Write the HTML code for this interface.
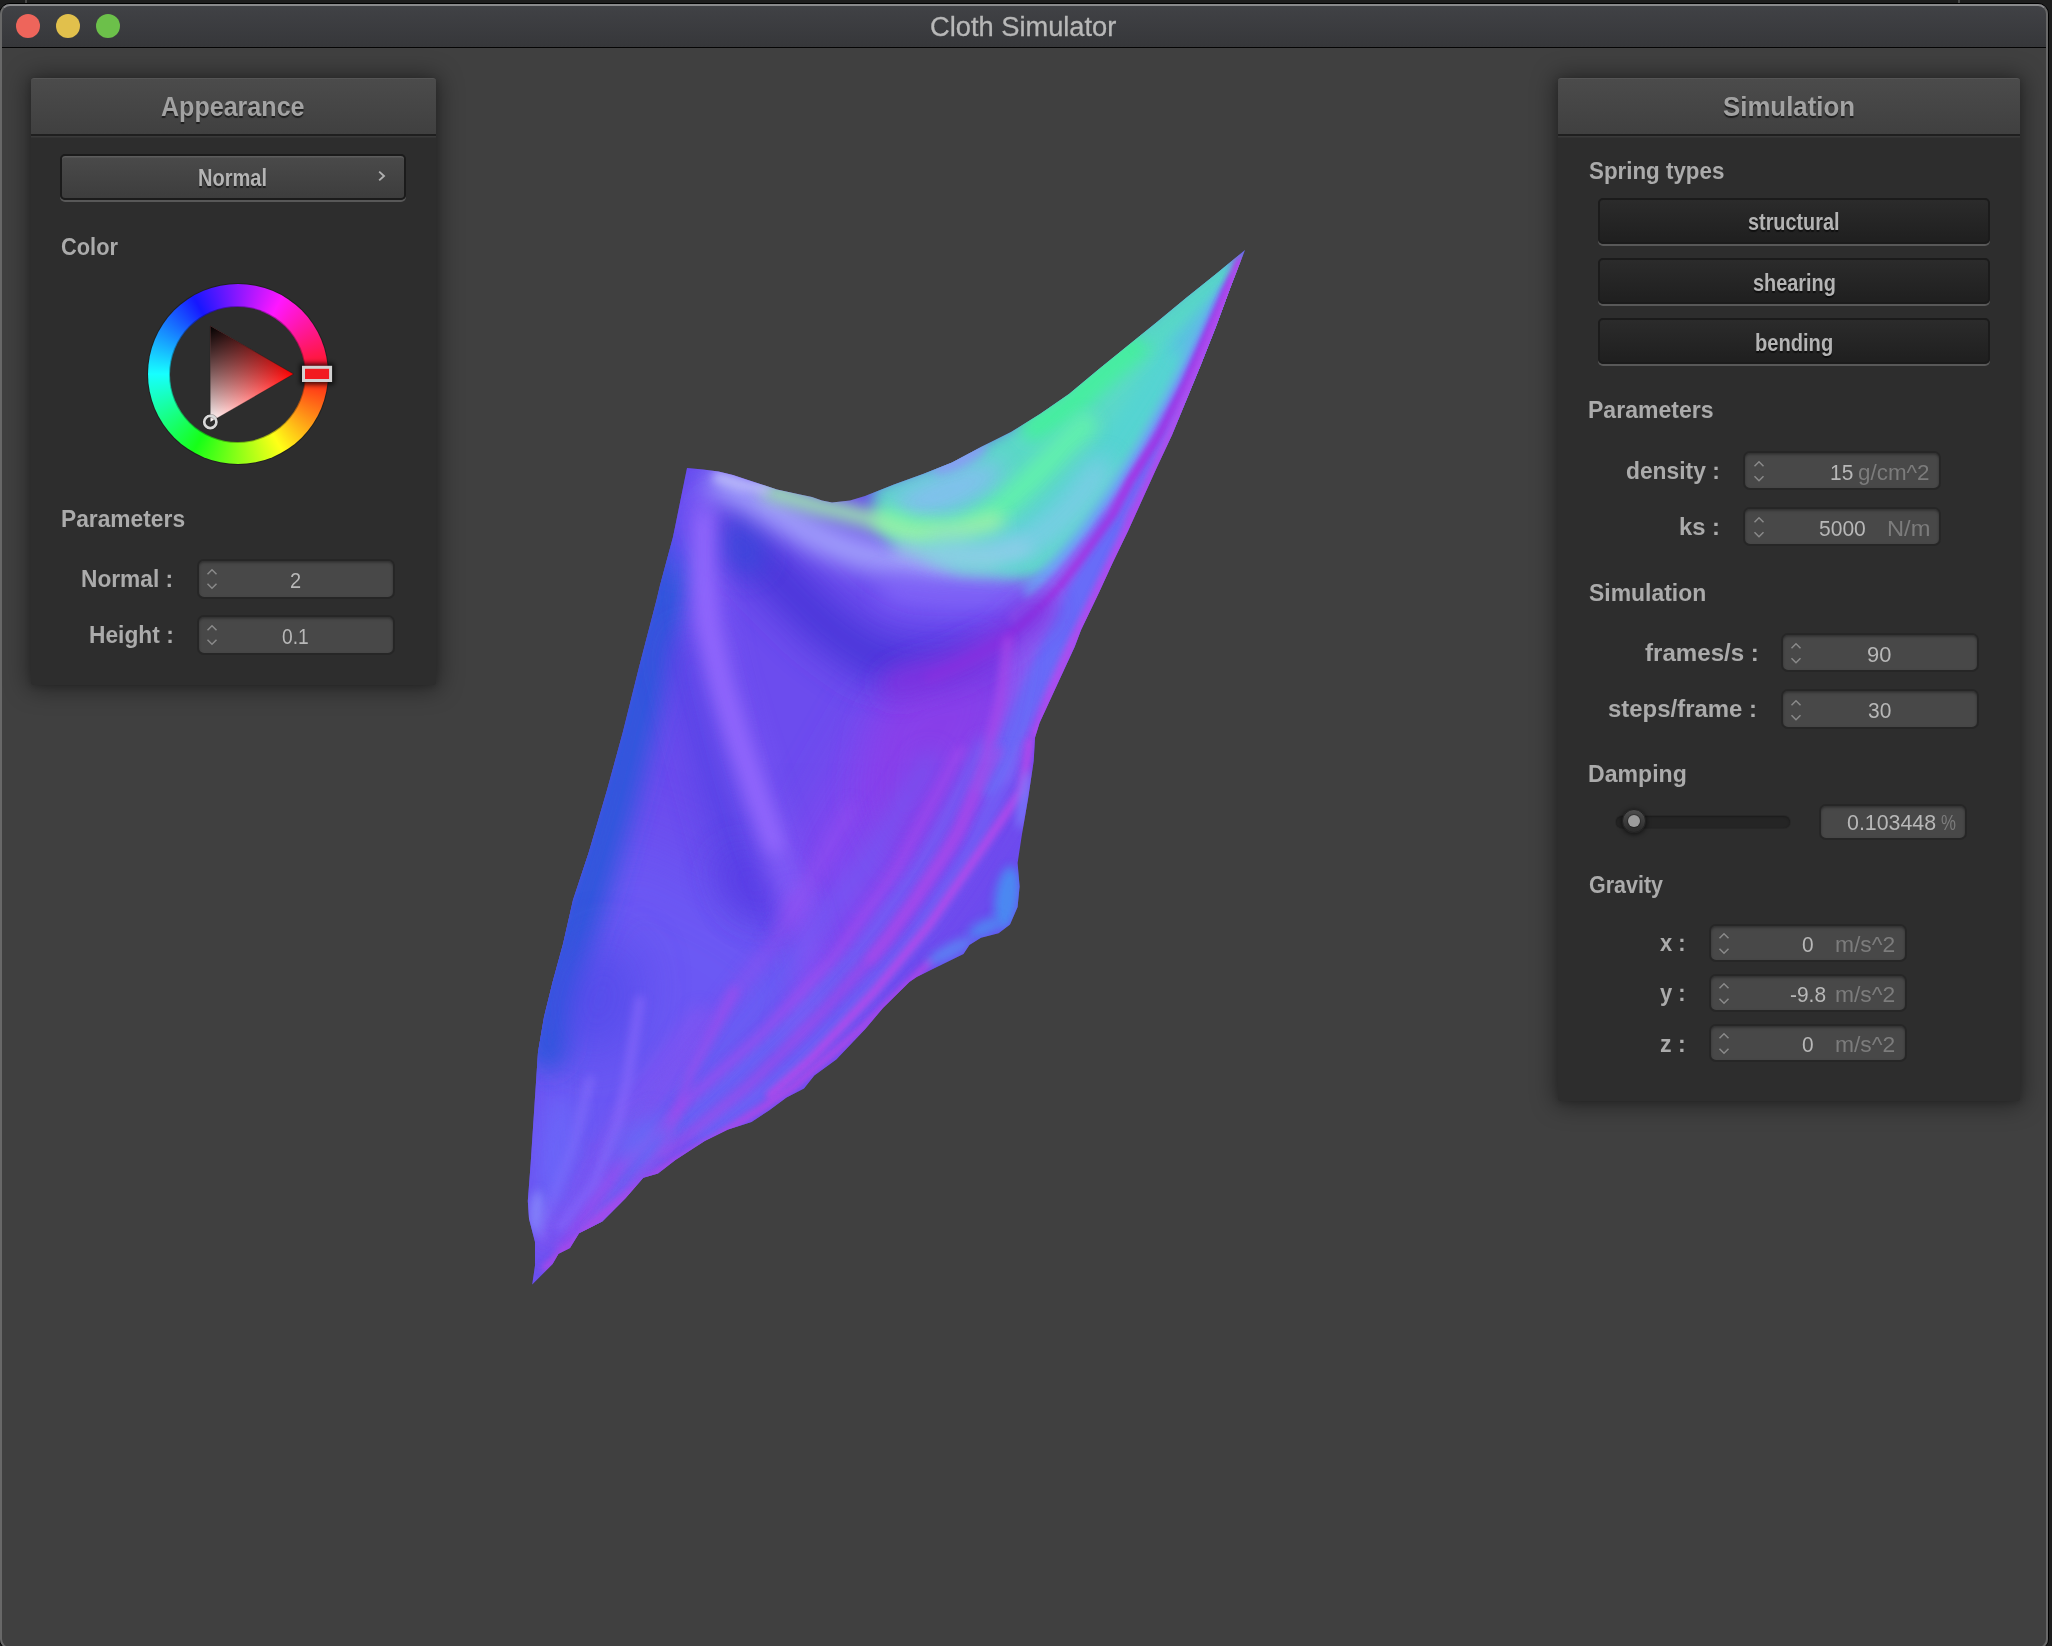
<!DOCTYPE html>
<html lang="en"><head><meta charset="utf-8"><title>Cloth Simulator</title>
<style>
html,body{margin:0;padding:0}
body{width:2052px;height:1646px;overflow:hidden;background:#1d1d1d;position:relative;
 font-family:"Liberation Sans",Arial,sans-serif}
.abs{position:absolute}
#tickl,#tickr{position:absolute;top:0;width:2px;height:3px;background:#484848}
#win{position:absolute;left:-1px;top:3px;width:2048px;height:1644.5px;border:1px solid #000;border-radius:11px;
 background:#404040;overflow:hidden}
#winedge{position:absolute;left:0;top:4px;width:2048px;height:1644.5px;border-radius:10px;box-sizing:border-box;
 border:2px solid #686868;border-top:2px solid #8a8a8c;pointer-events:none}
#titlebar{position:absolute;left:0;top:0;width:100%;height:43.4px;border-bottom:1.5px solid #050505;
 background:linear-gradient(#414246,#36373a)}
.light{position:absolute;top:13.9px;width:24.4px;height:24.4px;border-radius:50%}
.tx{position:absolute;white-space:nowrap;line-height:1;transform-origin:0 50%;display:inline-block}
.ttl{-webkit-text-stroke:0.3px #b8b8b8}
.panel{position:absolute;background:#2d2d2d;border-radius:3px;box-shadow:0 1px 24px 3px rgba(0,0,0,.44),0 1px 6px rgba(0,0,0,.18)}
.phdr{position:absolute;left:0;top:0;width:100%;box-sizing:border-box;border-radius:3px 3px 0 0;background:linear-gradient(#4b4b4b,#404040);
 border-top:1px solid #555;border-bottom:2.5px solid #1f1f1f;box-shadow:0 1.5px 0 #3a3a3a}
.btn{position:absolute;box-sizing:border-box;border:2px solid #1b1b1b;border-radius:5px;
 background:linear-gradient(#4a4a4a,#3d3d3d);box-shadow:0 2px 0 #585858, inset 0 1.5px 0 #5c5c5c}
.btn.pushed{background:linear-gradient(#2b2b2b,#1f1f1f);box-shadow:0 2px 0 #585858}
.tb{position:absolute;box-sizing:border-box;border:2.8px solid #262626;border-radius:7px;background:#484848;
 box-shadow:inset 0 1.5px 2.5px rgba(0,0,0,.35)}
.track{position:absolute;border-radius:6px;background:#252525;box-shadow:inset 0 1px 2px #1c1c1c,0 0 0 1px rgba(0,0,0,.12)}
.knob{position:absolute;width:24px;height:24px;border-radius:50%;background:linear-gradient(#4e4e4e,#2a2a2a);
 box-shadow:0 1px 4px 1px rgba(0,0,0,.5);border:1px solid #222;box-sizing:border-box}
.knobdot{position:absolute;width:12.4px;height:12.4px;border-radius:50%;background:#9c9c9c;box-shadow:0 0 0 1px rgba(0,0,0,.25)}
</style></head>
<body>
<div id="tickl" style="left:25px"></div><div id="tickr" style="left:1958px"></div>
<div id="win">
 <div id="titlebar"></div>
</div>
<div id="winedge"></div>
<div class="light" style="left:15.8px;background:#ee655b"></div>
<div class="light" style="left:55.8px;background:#e1c04c"></div>
<div class="light" style="left:95.8px;background:#6cc04a"></div>
<span id="t39" class="tx ttl" style="left:929.68px;top:14.01px;font-size:26.80px;font-weight:400;color:#b8b8b8;transform:scaleX(1.0172)">Cloth Simulator</span>
<!--CLOTH-->
<svg class="abs" style="left:0;top:0" width="2052" height="1646" viewBox="0 0 2052 1646">
<defs>
<clipPath id="cc"><polygon points="687.0,468.0 703.0,469.5 718.5,471.5 733.0,475.0 748.0,480.0 777.0,489.5 800.0,494.5 812.0,497.0 822.0,500.5 832.0,502.5 850.0,500.5 865.0,496.0 894.0,484.5 923.0,474.0 952.0,462.5 982.0,446.5 1011.0,432.0 1040.0,414.0 1069.0,394.0 1099.0,369.0 1128.0,345.5 1157.0,322.0 1186.0,298.0 1216.0,274.0 1245.0,250.0 1230.0,288.5 1216.0,326.5 1201.0,364.5 1186.0,401.0 1172.0,435.0 1157.0,467.0 1142.5,499.0 1128.0,531.0 1113.0,562.0 1099.0,592.6 1081.0,630.0 1074.6,647.0 1057.0,685.0 1039.5,723.0 1035.0,737.5 1033.7,761.0 1028.0,799.0 1022.0,834.0 1017.6,863.0 1019.6,886.5 1017.6,907.0 1010.0,924.6 998.6,933.3 981.0,937.7 969.4,945.0 963.5,954.0 940.0,965.5 916.7,977.0 909.4,982.0 883.0,1008.0 865.5,1028.7 836.3,1059.4 814.3,1075.4 804.0,1088.6 786.5,1097.4 769.0,1110.5 751.5,1122.0 728.0,1129.5 704.7,1141.0 675.4,1160.0 658.0,1173.4 643.3,1177.8 625.7,1198.0 602.3,1221.6 579.0,1233.3 570.0,1248.0 558.5,1253.8 552.6,1264.0 532.2,1284.5 535.0,1265.5 535.0,1242.0 529.0,1218.7 527.8,1201.0 530.7,1163.0 534.5,1104.7 538.0,1052.0 544.0,1017.0 552.6,982.0 563.0,944.0 573.0,900.0 589.0,851.5 607.0,790.0 623.0,731.6 639.0,667.3 656.5,600.0 660.0,585.3 673.0,537.0"/></clipPath>
<filter id="b3" filterUnits="userSpaceOnUse" x="420" y="160" width="940" height="1220"><feGaussianBlur stdDeviation="3"/></filter>
<filter id="b5" filterUnits="userSpaceOnUse" x="420" y="160" width="940" height="1220"><feGaussianBlur stdDeviation="5"/></filter>
<filter id="b8" filterUnits="userSpaceOnUse" x="420" y="160" width="940" height="1220"><feGaussianBlur stdDeviation="8"/></filter>
<filter id="b12" filterUnits="userSpaceOnUse" x="420" y="160" width="940" height="1220"><feGaussianBlur stdDeviation="12"/></filter>
<filter id="b18" filterUnits="userSpaceOnUse" x="420" y="160" width="940" height="1220"><feGaussianBlur stdDeviation="18"/></filter>
<filter id="b25" filterUnits="userSpaceOnUse" x="420" y="160" width="940" height="1220"><feGaussianBlur stdDeviation="25"/></filter>
<filter id="b35" filterUnits="userSpaceOnUse" x="420" y="160" width="940" height="1220"><feGaussianBlur stdDeviation="35"/></filter>
</defs>
<g clip-path="url(#cc)">
<rect x="500" y="230" width="780" height="1080" fill="#6c4cee"/>
<polygon points="600.0,820.0 760.0,900.0 880.0,1000.0 700.0,1160.0 520.0,1300.0 505.0,1050.0" fill="#6c5af4" filter="url(#b35)" opacity="0.9"/>
<path d="M676.0 560.0 L664.0 610.0 L650.0 665.0 L632.0 735.0 L615.0 800.0 L597.0 860.0 L580.0 915.0 L566.0 965.0 L554.0 1010.0 L548.0 1050.0" fill="none" stroke="#2f56dc" stroke-width="42" stroke-linecap="round" stroke-linejoin="round" filter="url(#b12)" opacity="1"/>
<path d="M694.0 480.0 L686.0 520.0 L676.0 560.0" fill="none" stroke="#5c4ef2" stroke-width="26" stroke-linecap="round" stroke-linejoin="round" filter="url(#b12)" opacity="0.7"/>
<polygon points="880.0,700.0 1020.0,650.0 1030.0,760.0 940.0,900.0 830.0,1010.0 790.0,860.0" fill="#8446f0" filter="url(#b25)" opacity="0.95"/>
<path d="M722.0 522.0 L745.0 542.0 L786.0 586.0 L825.0 624.0 L873.0 658.0 L930.0 668.0 L975.0 664.0" fill="none" stroke="#4636d8" stroke-width="44" stroke-linecap="round" stroke-linejoin="round" filter="url(#b18)" opacity="1"/>
<ellipse cx="742" cy="548" rx="22" ry="30" transform="rotate(-35 742 548)" fill="#3c48dc" filter="url(#b12)" opacity="0.8"/>
<path d="M688.0 650.0 L715.0 760.0 L740.0 850.0 L755.0 895.0" fill="none" stroke="#5242e4" stroke-width="38" stroke-linecap="round" stroke-linejoin="round" filter="url(#b18)" opacity="0.9"/>
<ellipse cx="755" cy="885" rx="42" ry="26" transform="rotate(40 755 885)" fill="#5a3ee6" filter="url(#b18)" opacity="0.9"/>
<ellipse cx="600" cy="1000" rx="36" ry="60" transform="rotate(15 600 1000)" fill="#5048e8" filter="url(#b25)" opacity="0.8"/>
<path d="M703.0 500.0 L702.0 560.0 L707.0 620.0 L720.0 680.0 L738.0 740.0 L758.0 800.0 L780.0 860.0 L798.0 905.0" fill="none" stroke="#8a64fa" stroke-width="34" stroke-linecap="round" stroke-linejoin="round" filter="url(#b12)" opacity="0.75"/>
<path d="M704.0 520.0 L703.0 570.0 L708.0 625.0 L721.0 683.0 L739.0 742.0 L759.0 801.0 L775.0 845.0" fill="none" stroke="#9a6cff" stroke-width="16" stroke-linecap="round" stroke-linejoin="round" filter="url(#b8)" opacity="0.8"/>
<path d="M798.0 905.0 L812.0 960.0 L795.0 1030.0" fill="none" stroke="#9050f4" stroke-width="24" stroke-linecap="round" stroke-linejoin="round" filter="url(#b12)" opacity="0.75"/>
<path d="M722.0 483.0 L750.0 497.0 L780.0 515.0 L815.0 536.0 L855.0 552.0 L893.0 561.0 L935.0 566.0 L971.0 567.0 L1010.0 565.0 L1050.0 554.0" fill="none" stroke="#a4a4fc" stroke-width="30" stroke-linecap="round" stroke-linejoin="round" filter="url(#b12)" opacity="1"/>
<path d="M893.0 590.0 L950.0 598.0 L1010.0 596.0 L1055.0 580.0" fill="none" stroke="#8468fa" stroke-width="26" stroke-linecap="round" stroke-linejoin="round" filter="url(#b12)" opacity="0.85"/>
<polygon points="870.0,488.0 950.0,460.0 1040.0,410.0 1120.0,345.0 1200.0,283.0 1246.0,246.0 1230.0,292.0 1186.0,390.0 1136.0,480.0 1090.0,545.0 1040.0,580.0 960.0,572.0 890.0,540.0" fill="#5cd8c8" filter="url(#b8)" opacity="1"/>
<ellipse cx="945" cy="492" rx="62" ry="20" transform="rotate(-22 945 492)" fill="#84bef0" filter="url(#b12)" opacity="0.95"/>
<path d="M1180.0 345.0 L1150.0 395.0 L1118.0 442.0 L1085.0 485.0 L1050.0 522.0 L1010.0 550.0" fill="none" stroke="#54d4d2" stroke-width="34" stroke-linecap="round" stroke-linejoin="round" filter="url(#b8)" opacity="1"/>
<path d="M1232.0 275.0 L1210.0 305.0 L1185.0 345.0" fill="none" stroke="#5cc0e2" stroke-width="26" stroke-linecap="round" stroke-linejoin="round" filter="url(#b8)" opacity="1"/>
<path d="M1035.0 426.0 L1063.0 410.0 L1087.0 388.0 L1111.0 366.0 L1136.0 345.0" fill="none" stroke="#46eea0" stroke-width="30" stroke-linecap="round" stroke-linejoin="round" filter="url(#b8)" opacity="1"/>
<path d="M1150.0 334.0 L1172.0 315.0 L1195.0 296.0 L1222.0 275.0" fill="none" stroke="#56d8c6" stroke-width="22" stroke-linecap="round" stroke-linejoin="round" filter="url(#b8)" opacity="0.95"/>
<path d="M1085.0 425.0 L1052.0 458.0 L1026.0 484.0 L1002.0 506.0 L978.0 524.0 L953.0 534.0 L917.0 530.0 L885.0 517.0" fill="none" stroke="#62f0ac" stroke-width="24" stroke-linecap="round" stroke-linejoin="round" filter="url(#b8)" opacity="0.95"/>
<path d="M995.0 521.0 L955.0 532.0 L912.0 533.0 L873.0 520.0 L840.0 511.0 L815.0 505.0 L790.0 497.0 L770.0 491.0" fill="none" stroke="#a0f0a6" stroke-width="18" stroke-linecap="round" stroke-linejoin="round" filter="url(#b8)" opacity="0.9"/>
<path d="M765.0 489.0 L740.0 484.0 L718.0 477.0" fill="none" stroke="#c4c6fa" stroke-width="10" stroke-linecap="round" stroke-linejoin="round" filter="url(#b5)" opacity="0.8"/>
<ellipse cx="960" cy="459" rx="30" ry="9" transform="rotate(-27 960 459)" fill="#8a9cf6" filter="url(#b5)" opacity="0.85"/>
<path d="M900.0 548.0 L940.0 556.0 L985.0 558.0 L1025.0 548.0" fill="none" stroke="#a6d0ea" stroke-width="14" stroke-linecap="round" stroke-linejoin="round" filter="url(#b8)" opacity="0.8"/>
<path d="M940.0 548.0 L990.0 552.0 L1035.0 540.0 L1070.0 510.0 L1100.0 470.0" fill="none" stroke="#8ccaec" stroke-width="24" stroke-linecap="round" stroke-linejoin="round" filter="url(#b12)" opacity="0.8"/>
<path d="M1228.0 296.0 L1200.0 352.0 L1172.0 405.0 L1145.0 452.0 L1117.0 496.0 L1088.0 535.0 L1060.0 568.0 L1035.0 592.0" fill="none" stroke="#6ea4f6" stroke-width="22" stroke-linecap="round" stroke-linejoin="round" filter="url(#b5)" opacity="1"/>
<path d="M1232.0 292.0 L1206.0 346.0 L1180.0 398.0 L1153.0 447.0 L1125.0 492.0 L1097.0 531.0 L1068.0 566.0 L1042.0 594.0 L1015.0 618.0" fill="none" stroke="#8c62f4" stroke-width="12" stroke-linecap="round" stroke-linejoin="round" filter="url(#b3)" opacity="0.95"/>
<polygon points="1236.0,272.0 1186.0,384.0 1131.0,480.0 1098.0,536.0 1062.0,583.0 1029.0,618.0 1010.0,640.0 1002.0,690.0 992.0,740.0 985.0,790.0 1010.0,780.0 1026.0,745.0 1034.0,720.0 1058.0,680.0 1076.0,640.0 1120.0,545.0 1149.0,480.0 1186.0,398.0 1238.0,270.0" fill="#8a5ef4" filter="url(#b5)" opacity="1"/>
<path d="M1232.0 280.0 L1186.0 388.0 L1140.0 478.0 L1112.0 528.0" fill="none" stroke="#6a6cf8" stroke-width="9" stroke-linecap="round" stroke-linejoin="round" filter="url(#b3)" opacity="1"/>
<path d="M1112.0 528.0 L1080.0 592.0 L1052.0 648.0 L1028.0 700.0 L1005.0 748.0 L986.0 784.0" fill="none" stroke="#686cf8" stroke-width="24" stroke-linecap="round" stroke-linejoin="round" filter="url(#b5)" opacity="1"/>
<polygon points="1015.0,640.0 965.0,668.0 905.0,682.0 875.0,720.0 862.0,800.0 895.0,870.0 955.0,810.0 998.0,725.0" fill="#8a3ce8" filter="url(#b18)" opacity="0.8"/>
<path d="M1240.0 262.0 L1228.0 288.6 L1208.7 332.3 L1186.0 384.0 L1160.0 434.4 L1131.0 480.0 L1113.0 514.5 L1097.5 536.0 L1080.0 560.0 L1062.0 583.0 L1045.0 602.0 L1029.0 618.0 L1008.0 637.0" fill="none" stroke="#a62ee2" stroke-width="7" stroke-linecap="round" stroke-linejoin="round" filter="url(#b3)" opacity="1"/>
<path d="M1008.0 637.0 L987.0 650.0 L960.0 665.0 L930.0 678.0" fill="none" stroke="#9a2ee0" stroke-width="10" stroke-linecap="round" stroke-linejoin="round" filter="url(#b5)" opacity="0.8"/>
<path d="M1040.0 608.0 L1000.0 642.0 L950.0 668.0 L895.0 684.0" fill="none" stroke="#8030e0" stroke-width="30" stroke-linecap="round" stroke-linejoin="round" filter="url(#b12)" opacity="0.9"/>
<path d="M1241.0 262.0 L1226.0 300.0 L1200.0 365.0 L1172.0 432.0 L1146.0 490.0 L1120.0 545.0 L1095.0 598.0 L1071.0 648.0 L1050.0 696.0 L1035.0 735.0" fill="none" stroke="#b44cee" stroke-width="9" stroke-linecap="round" stroke-linejoin="round" filter="url(#b3)" opacity="0.95"/>
<path d="M1012.0 760.0 L972.0 850.0 L915.0 935.0 L850.0 1010.0 L785.0 1075.0 L700.0 1135.0" fill="none" stroke="#6e6cf8" stroke-width="16" stroke-linecap="round" stroke-linejoin="round" filter="url(#b8)" opacity="0.8"/>
<path d="M985.0 745.0 L925.0 860.0 L862.0 948.0 L790.0 1025.0 L718.0 1092.0 L640.0 1160.0 L585.0 1235.0" fill="none" stroke="#6c6cf6" stroke-width="14" stroke-linecap="round" stroke-linejoin="round" filter="url(#b8)" opacity="0.8"/>
<path d="M930.0 760.0 L870.0 860.0 L800.0 950.0 L725.0 1040.0 L655.0 1120.0 L600.0 1195.0" fill="none" stroke="#6a64f4" stroke-width="16" stroke-linecap="round" stroke-linejoin="round" filter="url(#b12)" opacity="0.7"/>
<path d="M1008.0 640.0 L1000.0 700.0 L985.0 760.0 L960.0 830.0 L915.0 900.0 L870.0 960.0" fill="none" stroke="#b048ea" stroke-width="7" stroke-linecap="round" stroke-linejoin="round" filter="url(#b5)" opacity="0.9"/>
<path d="M1030.0 742.0 L1022.0 790.0 L983.0 847.0 L929.0 925.0 L874.0 992.0 L812.0 1058.0 L770.0 1095.0" fill="none" stroke="#b44aea" stroke-width="8" stroke-linecap="round" stroke-linejoin="round" filter="url(#b3)" opacity="0.95"/>
<path d="M999.0 750.0 L948.0 851.0 L890.0 937.0 L820.0 1015.0 L749.5 1085.0 L663.7 1155.0" fill="none" stroke="#a848ea" stroke-width="8" stroke-linecap="round" stroke-linejoin="round" filter="url(#b5)" opacity="0.75"/>
<path d="M960.0 750.0 L897.7 867.0 L831.0 960.5 L757.0 1038.5 L687.0 1101.0 L617.0 1171.0 L558.5 1249.0" fill="none" stroke="#a44cee" stroke-width="9" stroke-linecap="round" stroke-linejoin="round" filter="url(#b5)" opacity="0.7"/>
<path d="M851.0 808.5 L773.0 945.0 L695.0 1042.0 L628.6 1140.0 L578.0 1229.5" fill="none" stroke="#9650f0" stroke-width="10" stroke-linecap="round" stroke-linejoin="round" filter="url(#b8)" opacity="0.7"/>
<path d="M930.0 962.0 L860.0 1030.0 L790.0 1090.0 L720.0 1135.0 L660.0 1170.0 L600.0 1218.0 L545.0 1268.0" fill="none" stroke="#b446e8" stroke-width="7" stroke-linecap="round" stroke-linejoin="round" filter="url(#b3)" opacity="0.9"/>
<path d="M700.0 1010.0 L640.0 1090.0 L585.0 1170.0 L540.0 1250.0" fill="none" stroke="#9a54f0" stroke-width="9" stroke-linecap="round" stroke-linejoin="round" filter="url(#b8)" opacity="0.6"/>
<ellipse cx="1007" cy="898" rx="12" ry="32" transform="rotate(8 1007 898)" fill="#4a8cf2" filter="url(#b5)" opacity="0.95"/>
<ellipse cx="985" cy="928" rx="18" ry="8" transform="rotate(-25 985 928)" fill="#4f86f2" filter="url(#b5)" opacity="0.9"/>
<ellipse cx="950" cy="951" rx="26" ry="7" transform="rotate(-28 950 951)" fill="#5a88f4" filter="url(#b5)" opacity="0.85"/>
<ellipse cx="1024" cy="800" rx="6" ry="30" transform="rotate(8 1024 800)" fill="#7c80fc" filter="url(#b5)" opacity="0.8"/>
<path d="M640.0 1000.0 L627.6 1078.0 L616.6 1127.6 L594.8 1182.0 L560.0 1228.0" fill="none" stroke="#8c6afc" stroke-width="9" stroke-linecap="round" stroke-linejoin="round" filter="url(#b5)" opacity="0.7"/>
<path d="M590.0 1080.0 L573.0 1146.0 L554.7 1191.0 L540.0 1237.0" fill="none" stroke="#8a70fc" stroke-width="8" stroke-linecap="round" stroke-linejoin="round" filter="url(#b5)" opacity="0.7"/>
<path d="M735.0 990.0 L691.0 1073.0 L664.0 1146.0 L627.6 1191.0 L587.5 1228.0" fill="none" stroke="#a64cec" stroke-width="7" stroke-linecap="round" stroke-linejoin="round" filter="url(#b5)" opacity="0.75"/>
<ellipse cx="556" cy="1150" rx="14" ry="60" transform="rotate(8 556 1150)" fill="#6c70fc" filter="url(#b12)" opacity="0.7"/>
<ellipse cx="640" cy="1140" rx="30" ry="14" transform="rotate(-42 640 1140)" fill="#5f74f8" filter="url(#b12)" opacity="0.7"/>
<ellipse cx="536" cy="1212" rx="7" ry="22" transform="rotate(5 536 1212)" fill="#8a8cfc" filter="url(#b5)" opacity="0.8"/>
</g>
</svg>
<!--UI-->
<div class="panel" style="left:30.5px;top:78.0px;width:405.5px;height:607.4px"><div class="phdr" style="height:58.2px"></div></div>
<span id="t1" class="tx " style="left:160.50px;top:93.04px;font-size:27.60px;font-weight:700;color:#a2a2a2;text-shadow:0 1.5px 1px rgba(0,0,0,.55);transform:scaleX(0.9085)">Appearance</span>
<div class="btn " style="left:60.0px;top:154.1px;width:345.6px;height:45.8px"></div>
<span id="t2" class="tx " style="left:197.84px;top:167.19px;font-size:23.40px;font-weight:700;color:#b4b4b4;text-shadow:0 1.5px 1px rgba(0,0,0,.55);transform:scaleX(0.8554)">Normal</span>
<svg class="abs" style="left:374px;top:168px" width="16" height="16" viewBox="0 0 16 16"><path d="M5.2 3.6 L10 8 L5.2 12.4" fill="none" stroke="#b0b0b0" stroke-width="1.9"/></svg>
<span id="t3" class="tx " style="left:61.40px;top:236.41px;font-size:23.50px;font-weight:700;color:#ababab;transform:scaleX(0.9280)">Color</span>
<div class="abs" style="left:146.8px;top:283.1px;width:181.8px;height:181.8px;border-radius:50%;background:rgba(0,0,0,.28)"></div>
<div class="abs" style="left:147.7px;top:284px;width:180px;height:180px;border-radius:50%;
 background:linear-gradient(rgba(255,255,255,.09),rgba(255,255,255,.09)),conic-gradient(from 90deg,#ff0000 0deg,#ffff00 60deg,#00ff00 120deg,#00ffff 180deg,#0000ff 240deg,#ff00ff 300deg,#ff0000 360deg)"></div>
<div class="abs" style="left:170.2px;top:306.5px;width:135px;height:135px;border-radius:50%;background:#2d2d2d;box-shadow:0 0 0 1px rgba(0,0,0,.3)"></div>
<svg class="abs" style="left:140px;top:276px" width="200" height="200" viewBox="140 276 200 200">
 <defs>
  <linearGradient id="tg1" gradientUnits="userSpaceOnUse" x1="293.5" y1="374" x2="210.3" y2="422">
   <stop offset="0" stop-color="#ff0000"/><stop offset="1" stop-color="#ffffff"/></linearGradient>
  <linearGradient id="tg2" gradientUnits="userSpaceOnUse" x1="251.9" y1="398" x2="210.3" y2="326">
   <stop offset="0" stop-color="#000" stop-opacity="0"/><stop offset="1" stop-color="#000" stop-opacity="1"/></linearGradient>
  <filter id="hsh" x="-50%" y="-80%" width="200%" height="260%"><feGaussianBlur stdDeviation="2.6"/></filter>
 </defs>
 <polygon points="293.5,374 210.3,422 210.3,326" fill="url(#tg1)"/>
 <polygon points="293.5,374 210.3,422 210.3,326" fill="url(#tg2)" stroke="rgba(0,0,0,.25)" stroke-width="1"/>
 <circle cx="210.3" cy="422" r="6.1" fill="none" stroke="rgba(0,0,0,.35)" stroke-width="4"/>
 <circle cx="210.3" cy="422" r="6.1" fill="none" stroke="#d8d8d8" stroke-width="2.7"/>
 <rect x="300" y="363.5" width="34" height="21" fill="rgba(0,0,0,.75)" filter="url(#hsh)"/>
 <rect x="303.5" y="367.3" width="27.1" height="13.2" fill="#f21a20" stroke="#d2d2d2" stroke-width="3"/>
</svg>

<span id="t4" class="tx " style="left:60.63px;top:508.31px;font-size:23.50px;font-weight:700;color:#ababab;transform:scaleX(0.9688)">Parameters</span>
<span id="t5" class="tx " style="left:80.63px;top:567.91px;font-size:23.50px;font-weight:700;color:#ababab;transform:scaleX(0.9666)">Normal :</span>
<div class="tb" style="left:197.2px;top:558.6px;width:198.2px;height:40.2px"></div>
<svg class="abs" style="left:205.0px;top:568.0px" width="14" height="24" viewBox="0 0 14 24"><path d="M2.5 6.2 L7 1.8 L11.5 6.2" fill="none" stroke="#8a8a8a" stroke-width="1.5"/><path d="M2.5 15.8 L7 20.2 L11.5 15.8" fill="none" stroke="#8a8a8a" stroke-width="1.5"/></svg>
<span id="t6" class="tx " style="left:289.59px;top:570.38px;font-size:22.00px;font-weight:400;color:#b8b8b8;transform:scaleX(0.9091)">2</span>
<span id="t7" class="tx " style="left:88.63px;top:624.01px;font-size:23.50px;font-weight:700;color:#ababab;transform:scaleX(0.9689)">Height :</span>
<div class="tb" style="left:197.2px;top:614.6px;width:198.2px;height:40.0px"></div>
<svg class="abs" style="left:205.0px;top:624.0px" width="14" height="24" viewBox="0 0 14 24"><path d="M2.5 6.2 L7 1.8 L11.5 6.2" fill="none" stroke="#8a8a8a" stroke-width="1.5"/><path d="M2.5 15.8 L7 20.2 L11.5 15.8" fill="none" stroke="#8a8a8a" stroke-width="1.5"/></svg>
<span id="t8" class="tx " style="left:281.50px;top:626.38px;font-size:22.00px;font-weight:400;color:#b8b8b8;transform:scaleX(0.8732)">0.1</span>
<div class="panel" style="left:1558.0px;top:78.0px;width:462.0px;height:1022.5px"><div class="phdr" style="height:58.2px"></div></div>
<span id="t9" class="tx " style="left:1722.70px;top:93.04px;font-size:27.60px;font-weight:700;color:#a2a2a2;text-shadow:0 1.5px 1px rgba(0,0,0,.55);transform:scaleX(0.9359)">Simulation</span>
<span id="t10" class="tx " style="left:1588.70px;top:160.11px;font-size:23.50px;font-weight:700;color:#ababab;transform:scaleX(0.9511)">Spring types</span>
<div class="btn pushed" style="left:1597.6px;top:198.1px;width:392.8px;height:45.7px"></div>
<span id="t11" class="tx " style="left:1748.20px;top:211.49px;font-size:23.40px;font-weight:700;color:#b4b4b4;text-shadow:0 1.5px 1px rgba(0,0,0,.55);transform:scaleX(0.8479)">structural</span>
<div class="btn pushed" style="left:1597.6px;top:258.2px;width:392.8px;height:45.7px"></div>
<span id="t12" class="tx " style="left:1753.30px;top:271.59px;font-size:23.40px;font-weight:700;color:#b4b4b4;text-shadow:0 1.5px 1px rgba(0,0,0,.55);transform:scaleX(0.8492)">shearing</span>
<div class="btn pushed" style="left:1597.6px;top:318.4px;width:392.8px;height:45.7px"></div>
<span id="t13" class="tx " style="left:1754.54px;top:331.79px;font-size:23.40px;font-weight:700;color:#b4b4b4;text-shadow:0 1.5px 1px rgba(0,0,0,.55);transform:scaleX(0.8595)">bending</span>
<span id="t14" class="tx " style="left:1587.72px;top:399.41px;font-size:23.50px;font-weight:700;color:#ababab;transform:scaleX(0.9806)">Parameters</span>
<span id="t15" class="tx " style="left:1626.30px;top:460.11px;font-size:23.50px;font-weight:700;color:#ababab;transform:scaleX(0.9704)">density :</span>
<div class="tb" style="left:1742.6px;top:450.9px;width:198.8px;height:39.3px"></div>
<svg class="abs" style="left:1751.5px;top:460.0px" width="14" height="24" viewBox="0 0 14 24"><path d="M2.5 6.2 L7 1.8 L11.5 6.2" fill="none" stroke="#8a8a8a" stroke-width="1.5"/><path d="M2.5 16.3 L7 20.7 L11.5 16.3" fill="none" stroke="#8a8a8a" stroke-width="1.5"/></svg>
<span id="t16" class="tx " style="left:1830.15px;top:462.18px;font-size:22.00px;font-weight:400;color:#b8b8b8;transform:scaleX(0.9511)">15</span>
<span id="t17" class="tx " style="left:1858.30px;top:462.18px;font-size:22.00px;font-weight:400;color:#7c7c7c;transform:scaleX(1.0186)">g/cm^2</span>
<span id="t18" class="tx " style="left:1679.19px;top:516.01px;font-size:23.50px;font-weight:700;color:#ababab;transform:scaleX(1.0115)">ks :</span>
<div class="tb" style="left:1742.6px;top:506.6px;width:198.8px;height:39.3px"></div>
<svg class="abs" style="left:1751.5px;top:515.7px" width="14" height="24" viewBox="0 0 14 24"><path d="M2.5 6.2 L7 1.8 L11.5 6.2" fill="none" stroke="#8a8a8a" stroke-width="1.5"/><path d="M2.5 16.3 L7 20.7 L11.5 16.3" fill="none" stroke="#8a8a8a" stroke-width="1.5"/></svg>
<span id="t19" class="tx " style="left:1818.70px;top:517.98px;font-size:22.00px;font-weight:400;color:#b8b8b8;transform:scaleX(0.9568)">5000</span>
<span id="t20" class="tx " style="left:1887.12px;top:517.98px;font-size:22.00px;font-weight:400;color:#7c7c7c;transform:scaleX(1.0763)">N/m</span>
<span id="t21" class="tx " style="left:1588.70px;top:582.41px;font-size:23.50px;font-weight:700;color:#ababab;transform:scaleX(0.9759)">Simulation</span>
<span id="t22" class="tx " style="left:1644.50px;top:642.01px;font-size:23.50px;font-weight:700;color:#ababab;transform:scaleX(1.0256)">frames/s :</span>
<div class="tb" style="left:1780.9px;top:632.9px;width:198.5px;height:39.5px"></div>
<svg class="abs" style="left:1789.2px;top:642.0px" width="14" height="24" viewBox="0 0 14 24"><path d="M2.5 6.2 L7 1.8 L11.5 6.2" fill="none" stroke="#8a8a8a" stroke-width="1.5"/><path d="M2.5 16.3 L7 20.7 L11.5 16.3" fill="none" stroke="#8a8a8a" stroke-width="1.5"/></svg>
<span id="t23" class="tx " style="left:1867.21px;top:644.18px;font-size:22.00px;font-weight:400;color:#b8b8b8;transform:scaleX(0.9942)">90</span>
<span id="t24" class="tx " style="left:1608.20px;top:698.11px;font-size:23.50px;font-weight:700;color:#ababab;transform:scaleX(1.0190)">steps/frame :</span>
<div class="tb" style="left:1780.9px;top:689.4px;width:198.5px;height:39.3px"></div>
<svg class="abs" style="left:1789.2px;top:698.5px" width="14" height="24" viewBox="0 0 14 24"><path d="M2.5 6.2 L7 1.8 L11.5 6.2" fill="none" stroke="#8a8a8a" stroke-width="1.5"/><path d="M2.5 16.3 L7 20.7 L11.5 16.3" fill="none" stroke="#8a8a8a" stroke-width="1.5"/></svg>
<span id="t25" class="tx " style="left:1868.20px;top:700.48px;font-size:22.00px;font-weight:400;color:#b8b8b8;transform:scaleX(0.9532)">30</span>
<span id="t26" class="tx " style="left:1587.72px;top:763.31px;font-size:23.50px;font-weight:700;color:#ababab;transform:scaleX(0.9829)">Damping</span>
<div class="track" style="left:1616px;top:816px;width:174px;height:11.6px"></div>
<div class="knob" style="left:1621.9px;top:808.8px"></div><div class="knobdot" style="left:1627.7px;top:814.6px"></div>
<div class="tb" style="left:1819.1px;top:803.6px;width:147.8px;height:36.2px"></div>
<span id="t27" class="tx " style="left:1847.20px;top:811.68px;font-size:22.00px;font-weight:400;color:#b8b8b8;transform:scaleX(0.9713)">0.103448</span>
<span id="t28" class="tx " style="left:1940.50px;top:811.68px;font-size:22.00px;font-weight:400;color:#7c7c7c;transform:scaleX(0.7632)">%</span>
<span id="t29" class="tx " style="left:1588.70px;top:874.11px;font-size:23.50px;font-weight:700;color:#ababab;transform:scaleX(0.9133)">Gravity</span>
<span id="t30" class="tx " style="left:1660.00px;top:932.41px;font-size:23.50px;font-weight:700;color:#ababab;transform:scaleX(0.9336)">x :</span>
<div class="tb" style="left:1708.9px;top:924.2px;width:198.0px;height:38.0px"></div>
<svg class="abs" style="left:1717.3px;top:932.1px" width="14" height="25" viewBox="0 0 14 25"><path d="M2.5 6.2 L7 1.8 L11.5 6.2" fill="none" stroke="#8a8a8a" stroke-width="1.5"/><path d="M2.5 16.8 L7 21.2 L11.5 16.8" fill="none" stroke="#8a8a8a" stroke-width="1.5"/></svg>
<span id="t31" class="tx " style="left:1802.10px;top:934.18px;font-size:22.00px;font-weight:400;color:#b8b8b8;transform:scaleX(0.9500)">0</span>
<span id="t32" class="tx " style="left:1835.26px;top:934.18px;font-size:22.00px;font-weight:400;color:#7c7c7c;transform:scaleX(1.0377)">m/s^2</span>
<span id="t33" class="tx " style="left:1660.00px;top:982.41px;font-size:23.50px;font-weight:700;color:#ababab;transform:scaleX(0.9336)">y :</span>
<div class="tb" style="left:1708.9px;top:974.2px;width:198.0px;height:38.0px"></div>
<svg class="abs" style="left:1717.3px;top:982.1px" width="14" height="25" viewBox="0 0 14 25"><path d="M2.5 6.2 L7 1.8 L11.5 6.2" fill="none" stroke="#8a8a8a" stroke-width="1.5"/><path d="M2.5 16.8 L7 21.2 L11.5 16.8" fill="none" stroke="#8a8a8a" stroke-width="1.5"/></svg>
<span id="t34" class="tx " style="left:1789.60px;top:984.18px;font-size:22.00px;font-weight:400;color:#b8b8b8;transform:scaleX(0.9503)">-9.8</span>
<span id="t35" class="tx " style="left:1835.26px;top:984.18px;font-size:22.00px;font-weight:400;color:#7c7c7c;transform:scaleX(1.0377)">m/s^2</span>
<span id="t36" class="tx " style="left:1660.00px;top:1032.51px;font-size:23.50px;font-weight:700;color:#ababab;transform:scaleX(0.9844)">z :</span>
<div class="tb" style="left:1708.9px;top:1024.3px;width:198.0px;height:38.0px"></div>
<svg class="abs" style="left:1717.3px;top:1032.2px" width="14" height="25" viewBox="0 0 14 25"><path d="M2.5 6.2 L7 1.8 L11.5 6.2" fill="none" stroke="#8a8a8a" stroke-width="1.5"/><path d="M2.5 16.8 L7 21.2 L11.5 16.8" fill="none" stroke="#8a8a8a" stroke-width="1.5"/></svg>
<span id="t37" class="tx " style="left:1802.10px;top:1034.28px;font-size:22.00px;font-weight:400;color:#b8b8b8;transform:scaleX(0.9500)">0</span>
<span id="t38" class="tx " style="left:1835.26px;top:1034.28px;font-size:22.00px;font-weight:400;color:#7c7c7c;transform:scaleX(1.0377)">m/s^2</span>
</body></html>
